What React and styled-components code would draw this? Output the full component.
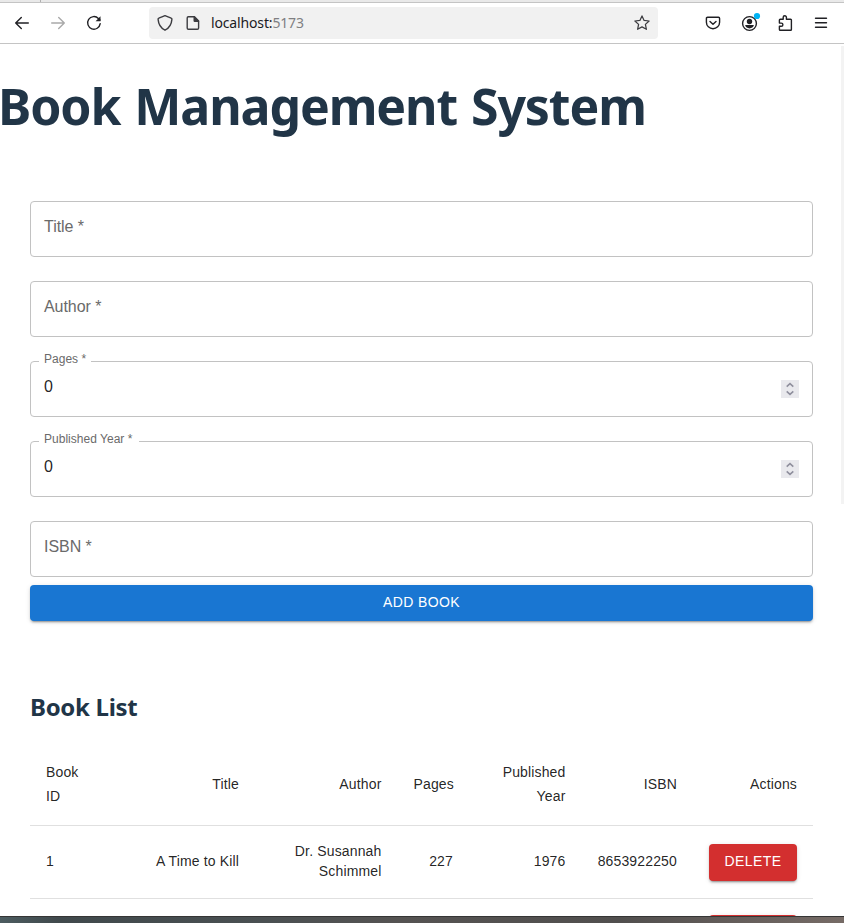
import React from "react";
import styled, { createGlobalStyle } from "styled-components";

const GlobalStyle = createGlobalStyle`
  * { box-sizing: border-box; }
  body { margin: 0; background: #fff; overflow: hidden; }
`;

const Window = styled.div`
  display: flex;
  flex-direction: column;
  width: 844px;
  height: 923px;
  overflow: hidden;
  background: #fff;
  font-family: "Liberation Sans", Arial, sans-serif;
  color: rgba(0, 0, 0, 0.87);
`;

const TabStrip = styled.div`
  display: flex;
  flex: none;
  height: 3px;
  padding-left: 40px;
  background: #e9e9e9;
  border-bottom: 1px solid #c4c4c4;
`;

const TabEdge = styled.div`
  width: 1px;
  background: #b0b0b0;
`;

const Toolbar = styled.header`
  display: flex;
  flex: none;
  align-items: center;
  height: 41px;
  padding-left: 12px;
  border-bottom: 1px solid #c4c4c4;
`;

const ToolButton = styled.button`
  display: flex;
  flex: none;
  align-items: center;
  justify-content: center;
  width: 20px;
  height: 20px;
  margin: 0 16px 0 0;
  padding: 0;
  border: 0;
  background: none;
  color: ${(p) => (p.$muted ? "#a9a9a9" : "#202024")};
`;

const AddressBar = styled.div`
  display: flex;
  flex: none;
  align-items: center;
  width: 509px;
  height: 32px;
  margin: 0 45px 0 29px;
  padding: 0 8px 0 6px;
  border-radius: 4px;
  background: #f1f1f1;
  color: #3c3c40;

  svg { display: block; flex: none; }
`;

const Url = styled.div`
  flex: 1;
  padding-left: 8px;
  font: 14px/20px "Noto Sans", "Open Sans", sans-serif;
  letter-spacing: -0.15px;
  color: #1b1b1f;
`;

const Port = styled.span`
  color: #7f7f82;
`;

const PageIcon = styled.div`
  margin-left: 8px;
`;

const Viewport = styled.div`
  display: flex;
  flex: none;
  height: 872px;
  overflow: hidden;
`;

const Page = styled.main`
  flex: none;
  width: 841px;
`;

const Scrollbar = styled.div`
  width: 3px;
  height: 458px;
  margin-top: 2px;
  background: #f3f3f3;
`;

const Title = styled.h1`
  margin: 34px 0 0;
  text-indent: -2px;
  font: 700 50px/56px "Noto Sans", "Open Sans", sans-serif;
  letter-spacing: ${(p) => p.$tracking};
  word-spacing: 2px;
  color: #213547;
  white-space: nowrap;
`;

const Form = styled.form`
  display: flex;
  flex-direction: column;
  width: 783px;
  margin: 67px 0 0 30px;
`;

const Field = styled.fieldset`
  display: flex;
  align-items: flex-start;
  justify-content: space-between;
  position: relative;
  height: 56px;
  min-width: 0;
  margin: 0 0 ${(p) => (p.$last ? "8px" : "24px")};
  padding: 14px 13px 0;
  border: 1px solid #c2c2c2;
  border-radius: 4px;
`;

const Label = styled.label`
  font-size: 16px;
  line-height: 22px;
  letter-spacing: -0.05px;
  color: #6a6a6a;
`;

const FloatingLabel = styled.label`
  position: absolute;
  top: -10px;
  left: 8px;
  width: ${(p) => p.$width};
  padding-left: 5px;
  background: #fff;
  font-size: 12px;
  line-height: 14px;
  letter-spacing: 0.02px;
  color: #6a6a6a;
  white-space: nowrap;
`;

const Value = styled.span`
  font-size: 16px;
  line-height: 22px;
`;

const Spinner = styled.span`
  display: flex;
  width: 18px;
  height: 18px;
  margin-top: 4px;
  background: #e9e9ed;
`;

const Button = styled.button`
  display: flex;
  align-items: center;
  justify-content: center;
  height: ${(p) => p.$height};
  padding: 0 0 3px;
  border: 0;
  border-radius: 4px;
  background: ${(p) => p.$color};
  color: #fff;
  font: 14px/20px "Liberation Sans", Arial, sans-serif;
  letter-spacing: ${(p) => p.$tracking};
  box-shadow: 0 3px 1px -2px rgba(0, 0, 0, 0.2), 0 2px 2px rgba(0, 0, 0, 0.14),
    0 1px 5px rgba(0, 0, 0, 0.12);
`;

const DeleteButton = styled(Button)`
  width: 88px;
`;

const ListHeading = styled.h2`
  margin: 71px 0 0 30px;
  font: 700 24px/30px "Noto Sans", "Open Sans", sans-serif;
  letter-spacing: ${(p) => p.$tracking};
  color: #213547;
`;

const Table = styled.table`
  width: 783px;
  margin: 22px 0 0 30px;
  table-layout: fixed;
  border-collapse: separate;
  border-spacing: 0;
`;

const Row = styled.tr`
  height: ${(p) => p.$height};
`;

const cell = (p) => `
  padding: 0 16px ${p.$raise || "1px"};
  border-bottom: 1px solid #e0e0e0;
  font-size: 14px;
  font-weight: 400;
  text-align: ${p.$left ? "left" : "right"};
  letter-spacing: 0.15px;
`;

const HeadCell = styled.th`
  ${cell}
  line-height: 24px;
`;

const Cell = styled.td`
  ${cell}
  line-height: 20px;
`;

const ActionCell = styled(Cell)`
  padding-bottom: 0;
`;

const Desktop = styled.footer`
  flex: none;
  height: 7px;
  border-top: 1px solid #353535;
  background: linear-gradient(90deg, #4c5c60 0, #40494c 60px, #4a5052 260px, #555352 400px, #514f4e 620px, #766b66 844px);
`;

const Stroke = ({ size = 16, children, width = 1.4 }) => (
  <svg width={size} height={size} viewBox="0 0 16 16" fill="none" stroke="currentColor"
    strokeWidth={width} strokeLinecap="round" strokeLinejoin="round">
    {children}
  </svg>
);

const Arrow = ({ forward }) => (
  <Stroke>
    <path d={forward ? "M1.7 8h12.6M8.7 2.5 14.3 8l-5.6 5.5" : "M14.3 8H1.7M7.3 2.5 1.7 8l5.6 5.5"} />
  </Stroke>
);

const Reload = () => (
  <Stroke>
    <path d="M14.2 8.7A6.3 6.3 0 1 1 12.4 3.4L14 5" />
    <path d="M14.5 1.3v4.9H9.6Z" fill="currentColor" stroke="none" />
  </Stroke>
);

const Shield = () => (
  <svg width="20" height="20" viewBox="0 0 20 20" fill="none" stroke="currentColor" strokeWidth="1.4" strokeLinejoin="round">
    <path d="M10 2.6 16.2 5.1c.6.2.8.6.7 1.3-.4 5-2.8 8.8-6.9 10.8C5.9 15.2 3.5 11.4 3.1 6.4c-.1-.7.1-1.1.7-1.3Z" />
  </svg>
);

const Document = () => (
  <svg width="20" height="20" viewBox="0 0 20 20" fill="none" stroke="currentColor" strokeWidth="1.4" strokeLinejoin="round">
    <path d="M5.4 3.7h6l4.2 4.2v7.2a1.2 1.2 0 0 1-1.2 1.2h-9a1.2 1.2 0 0 1-1.2-1.2V4.9a1.2 1.2 0 0 1 1.2-1.2Z" />
    <path d="M10.5 3.3h1.2l4.4 4.4v1.2h-4.4a1.2 1.2 0 0 1-1.2-1.2Z" fill="currentColor" stroke="none" />
  </svg>
);

const Star = () => (
  <Stroke width={1.25}>
    <path d="m8 .9 2.1 4.5 5 .6-3.7 3.4 1 4.9L8 11.9l-4.4 2.4 1-4.9L.9 6l5-.6Z" />
  </Stroke>
);

const Pocket = () => (
  <Stroke width={1.4}>
    <path d="M2.5 2.3h11c.7 0 1.1.4 1.1 1.1v3.8a6.6 6.6 0 0 1-13.2 0V3.4c0-.7.4-1.1 1.1-1.1Z" />
    <path d="m5 6.4 3 2.9 3-2.9" />
  </Stroke>
);

const Account = () => (
  <svg width="20" height="20" viewBox="0 0 20 20" overflow="visible">
    <circle cx="10.500" cy="10.5" r="6.9" fill="none" stroke="currentColor" strokeWidth="1.4" />
    <circle cx="10.500" cy="8.5" r="2.7" fill="currentColor" />
    <path d="M6.1 12.1h8.8c-.5 2.200-2.300 3.300-4.400 3.300s-3.900-1.100-4.400-3.300Z" fill="currentColor" />
    <circle cx="18" cy="3" r="3.1" fill="#00b3f4" />
  </svg>
);

const Puzzle = () => (
  <Stroke width={1.4}>
    <path d="M2.4 7V5c0-.5.3-.8.8-.8h3V2.300a1.600 1.600 0 0 1 3.200 0v1.900h4.200c.5 0 .8.3.8.800v9.400c0 .5-.3.800-.8.800H3.200c-.5 0-.8-.3-.8-.800v-3.100h1.900a1.600 1.600 0 0 0 0-3.200H2.400Z" />
  </Stroke>
);

const Menu = () => (
  <Stroke width={1.4}>
    <path d="M2.5 3.2h11M2.5 7.7h11M2.5 12.2h11" />
  </Stroke>
);

const NumberSpinner = () => (
  <Spinner>
    <svg width="18" height="18" viewBox="0 0 18 18" fill="none" stroke="#8f8f9d" strokeWidth="1.6">
      <path d="M5.7 6.7 9 3.7l3.3 3M5.7 11.3l3.3 3 3.3-3" />
    </svg>
  </Spinner>
);

const NumberField = ({ label, width }) => (
  <Field>
    <FloatingLabel $width={width}>{label} *</FloatingLabel>
    <Value>0</Value>
    <NumberSpinner />
  </Field>
);

const columns = [
  { name: "Book ID", width: 80 },
  { name: "Title", width: 145 },
  { name: "Author", width: 142.5 },
  { name: "Pages", width: 71.5 },
  { name: "Published Year", width: 112.5 },
  { name: "ISBN", width: 111.5 },
  { name: "Actions", width: 120 },
];

const book = ["1", "A Time to Kill", "Dr. Susannah Schimmel", "227", "1976", "8653922250"];

const Delete = ({ children }) => (
  <DeleteButton $color="#d32f2f" $height="37px" $tracking="0.42px">{children}</DeleteButton>
);

export default function App() {
  return (
    <Window>
      <GlobalStyle />
      <TabStrip><TabEdge /></TabStrip>
      <Toolbar>
        <ToolButton><Arrow /></ToolButton>
        <ToolButton $muted><Arrow forward /></ToolButton>
        <ToolButton><Reload /></ToolButton>
        <AddressBar>
          <Shield />
          <PageIcon><Document /></PageIcon>
          <Url>localhost:<Port>5173</Port></Url>
          <Star />
        </AddressBar>
        <ToolButton><Pocket /></ToolButton>
        <ToolButton><Account /></ToolButton>
        <ToolButton><Puzzle /></ToolButton>
        <ToolButton><Menu /></ToolButton>
      </Toolbar>
      <Viewport>
        <Page>
          <Title $tracking="-1.1px">Book Management System</Title>
          <Form>
            <Field><Label>Title *</Label></Field>
            <Field><Label>Author *</Label></Field>
            <NumberField label="Pages" width="52px" />
            <NumberField label="Published Year" width="100px" />
            <Field $last><Label>ISBN *</Label></Field>
            <Button type="button" $color="#1976d2" $height="36px" $tracking="0.4px">ADD BOOK</Button>
          </Form>
          <ListHeading $tracking="-0.3px">Book List</ListHeading>
          <Table>
            <colgroup>
              {columns.map((c) => <col key={c.name} width={c.width} />)}
            </colgroup>
            <thead>
              <Row $height="82px">
                {columns.map((c, i) => <HeadCell key={c.name} $left={i === 0}>{c.name}</HeadCell>)}
              </Row>
            </thead>
            <tbody>
              <Row $height="73px">
                {book.map((value, i) => <Cell key={value} $left={i === 0} $raise="2px">{value}</Cell>)}
                <ActionCell><Delete>DELETE</Delete></ActionCell>
              </Row>
              <Row $height="69px">
                {book.map((value) => <Cell key={value} />)}
                <ActionCell><Delete /></ActionCell>
              </Row>
            </tbody>
          </Table>
        </Page>
        <Scrollbar />
      </Viewport>
      <Desktop />
    </Window>
  );
}
